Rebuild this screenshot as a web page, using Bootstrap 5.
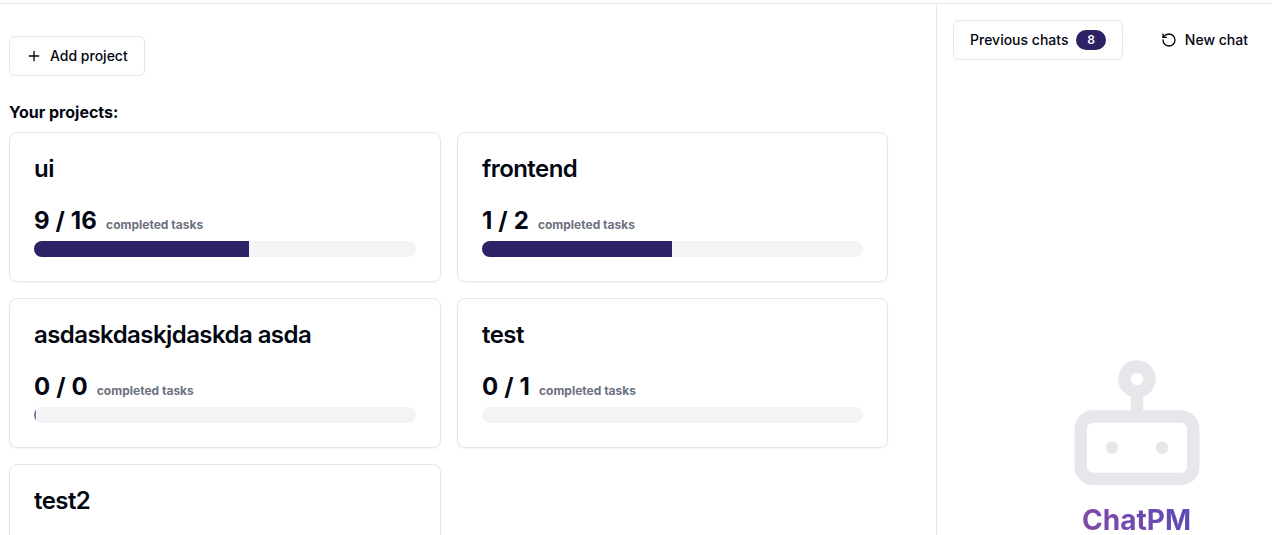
<!DOCTYPE html>
<html lang="en"><head><meta charset="utf-8">
<link href="https://cdn.jsdelivr.net/npm/bootstrap@5.3.0/dist/css/bootstrap.min.css" rel="stylesheet">
<style>
html,body{height:535px;overflow:hidden;background:#fff;font-family:Inter,sans-serif;color:#030712}
.topline{height:4px;border-bottom:1px solid #e5e7eb}
.shell{height:531px}
.mainpane{width:936px;padding:32px 9px 0;overflow:hidden}
.sidepane{width:336px;border-left:1px solid #e5e7eb;padding:16px 16px 0}
.addbtn,.prevbtn{height:40px;border:1px solid #e5e7eb;border-radius:6px;background:#fff;font-size:14px;font-weight:500;line-height:20px;color:#030712;padding:0 16px 1px}
.addbtn{width:136px}
.prevbtn{width:170px}
.newbtn{width:125px;height:40px;border:0;background:#fff;font-size:14px;font-weight:500;line-height:20px;color:#030712;padding:0 0 1px}
.heading{font-size:16px;font-weight:700;line-height:24px;margin:24px 0 8px}
.grid-projects{display:grid;grid-template-columns:432px 431px;gap:16px;width:879px}
.projcard{height:150px;border:1px solid #e5e7eb;border-radius:8px;padding:24px;box-shadow:0 1px 2px rgba(0,0,0,.05)}
.projname{font-size:24px;font-weight:600;line-height:24px;margin:0 0 24px;letter-spacing:-.0235em}
.stat{font-size:24px;font-weight:700;line-height:32px;height:32px;letter-spacing:.15px}
.stat span{font-size:12px;font-weight:700;color:#6b7280;margin-left:9px;letter-spacing:0}
.bartrack{height:16px;border-radius:8px;background:#f3f4f6;overflow:hidden;margin-top:4px}
.barfill{height:100%;background:#2e2267}
.count{background:#2e2267;color:#fff;border-radius:10px;font-size:12px;font-weight:600;min-width:30px;height:20px;line-height:20px;text-align:center;display:inline-block}
.logo-name{font-size:28px;font-weight:700;line-height:32px;background:linear-gradient(90deg,#8149a6,#5f4bb6);-webkit-background-clip:text;background-clip:text;color:transparent}
.logo{margin:294px 0 0 64px}
.logo svg{display:block}
</style></head><body>
<div class="topline"></div>
<div class="d-flex shell">
<main class="mainpane">
<button class="addbtn d-flex align-items-center gap-2"><svg width="16" height="16" viewBox="0 0 24 24" fill="none" stroke="currentColor" stroke-width="2" stroke-linecap="round"><path d="M5 12h14M12 5v14"/></svg>Add project</button>
<div class="heading">Your projects:</div>
<div class="grid-projects">
<div class="projcard"><div class="projname">ui</div><div class="stat">9 / 16<span>completed tasks</span></div><div class="bartrack"><div class="barfill" style="width:56.25%"></div></div></div>
<div class="projcard"><div class="projname">frontend</div><div class="stat">1 / 2<span>completed tasks</span></div><div class="bartrack"><div class="barfill" style="width:49.9%"></div></div></div>
<div class="projcard"><div class="projname">asdaskdaskjdaskda asda</div><div class="stat">0 / 0<span>completed tasks</span></div><div class="bartrack"><div class="barfill" style="width:0.4%;opacity:.6"></div></div></div>
<div class="projcard"><div class="projname">test</div><div class="stat">0 / 1<span>completed tasks</span></div><div class="bartrack"></div></div>
<div class="projcard"><div class="projname">test2</div></div>
</div>
</main>
<aside class="sidepane">
<div class="d-flex">
<button class="prevbtn d-flex align-items-center justify-content-between">Previous chats<span class="count">8</span></button>
<button class="newbtn d-flex align-items-center justify-content-end gap-2"><svg width="16" height="16" viewBox="0 0 24 24" fill="none" stroke="currentColor" stroke-width="2" stroke-linecap="round" stroke-linejoin="round"><path d="M3 12a9 9 0 1 0 9-9 9.75 9.75 0 0 0-6.74 2.74L3 8"/><path d="M3 3v5h5"/></svg>New chat</button>
</div>
<div class="logo d-flex flex-column align-items-center">
<svg width="150" height="150" viewBox="0 0 24 24" fill="none" stroke="#e5e7eb" stroke-width="2"><circle cx="12" cy="4" r="2"/><path d="M12 6v4"/><rect x="3" y="10" width="18" height="10" rx="2"/><circle cx="8" cy="15" r="1" fill="#e5e7eb" stroke="none"/><circle cx="16" cy="15" r="1" fill="#e5e7eb" stroke="none"/></svg>
<div class="logo-name">ChatPM</div>
</div>
</aside>
</div>
</body></html>
